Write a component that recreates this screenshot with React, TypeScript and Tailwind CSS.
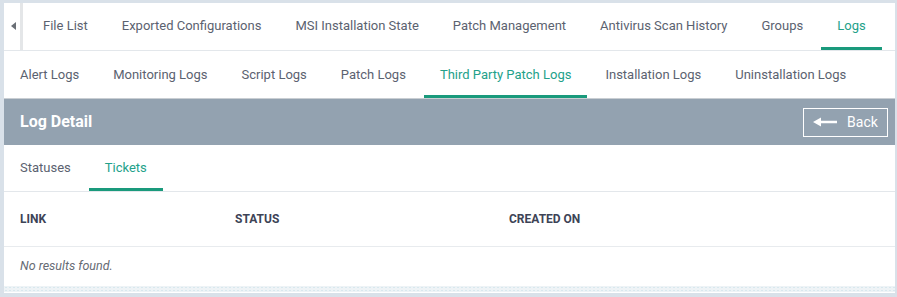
import React from "react";

const topTabs = [
  "File List",
  "Exported Configurations",
  "MSI Installation State",
  "Patch Management",
  "Antivirus Scan History",
  "Groups",
  "Logs",
];
const logTabs = [
  "Alert Logs",
  "Monitoring Logs",
  "Script Logs",
  "Patch Logs",
  "Third Party Patch Logs",
  "Installation Logs",
  "Uninstallation Logs",
];

function Tab({ label, active, lift }: { label: string; active: boolean; lift?: boolean }) {
  return (
    <div
      className={
        "relative flex items-center px-4 h-full text-[13px] whitespace-nowrap " +
        (active ? "text-[#23a18a]" : "text-[#5b6270]")
      }
    >
      <span className={lift ? "relative -top-[1px]" : ""}>{label}</span>
      {active && (
        <div className="absolute left-0 right-0 bottom-0 h-[3px] bg-[#1a9a7c]" />
      )}
    </div>
  );
}

export default function App() {
  return (
    <div
      className="w-[897px] h-[297px] bg-[#d9e1e9] pt-[3px] pl-[4px] pr-[2px] overflow-hidden"
      style={{ fontFamily: "Roboto, 'Liberation Sans', sans-serif" }}
    >
      <div className="bg-white h-[290px] flex flex-col">
        {/* top tabs */}
        <div className="flex h-[48px] border-b border-[#e3e7eb]">
          <div className="w-[19px] flex items-center justify-center border-r-[3px] border-[#e4e6e8] pb-[2px]">
            <svg width="5" height="8" viewBox="0 0 5 8" className="ml-[2px]">
              <path d="M5 0 L0 4 L5 8 Z" fill="#6a6f76" />
            </svg>
          </div>
          <div className="w-[4px]" />
          <div className="flex gap-[2px] h-full">
            {topTabs.map((t) => (
              <Tab key={t} label={t} active={t === "Logs"} lift />
            ))}
          </div>
        </div>
        {/* log tabs */}
        <div className="flex gap-[2px] h-[48px] border-b border-[#c9ced3]">
          {logTabs.map((t) => (
            <Tab key={t} label={t} active={t === "Third Party Patch Logs"} />
          ))}
        </div>
        {/* header */}
        <div className="h-[46px] bg-[#93a2b0] flex items-center justify-between pl-4 pr-[7px]">
          <div className="text-white font-bold text-[16px]">Log Detail</div>
          <div className="w-[85px] h-[29px] border border-white flex items-center justify-center gap-[10px] text-white text-[14px]">
            <svg width="24" height="10" viewBox="0 0 24 10">
              <path d="M0 5 L8 0.5 L8 3.8 L24 3.8 L24 6.2 L8 6.2 L8 9.5 Z" fill="#ffffff" />
            </svg>
            <span>Back</span>
          </div>
        </div>
        {/* sub tabs */}
        <div className="flex gap-[2px] h-[47px] border-b border-[#e3e7eb]">
          <Tab label="Statuses" active={false} />
          <Tab label="Tickets" active={true} />
        </div>
        {/* table header */}
        <div className="flex items-center h-[55px] border-b border-[#e8ebee] text-[12px] font-bold text-[#3d4356]">
          <div className="w-[231px] pl-4">LINK</div>
          <div className="w-[274px]">STATUS</div>
          <div>CREATED ON</div>
        </div>
        <div className="h-[39px] flex items-center pl-4 text-[12.5px] italic text-[#666b74]">
          No results found.
        </div>
        <div
          className="h-[6px] bg-[#eef3f6]"
          style={{
            backgroundImage:
              "radial-gradient(circle, #d8e8ee 0.8px, transparent 1px)",
            backgroundSize: "4px 3px",
          }}
        />
      </div>
    </div>
  );
}
